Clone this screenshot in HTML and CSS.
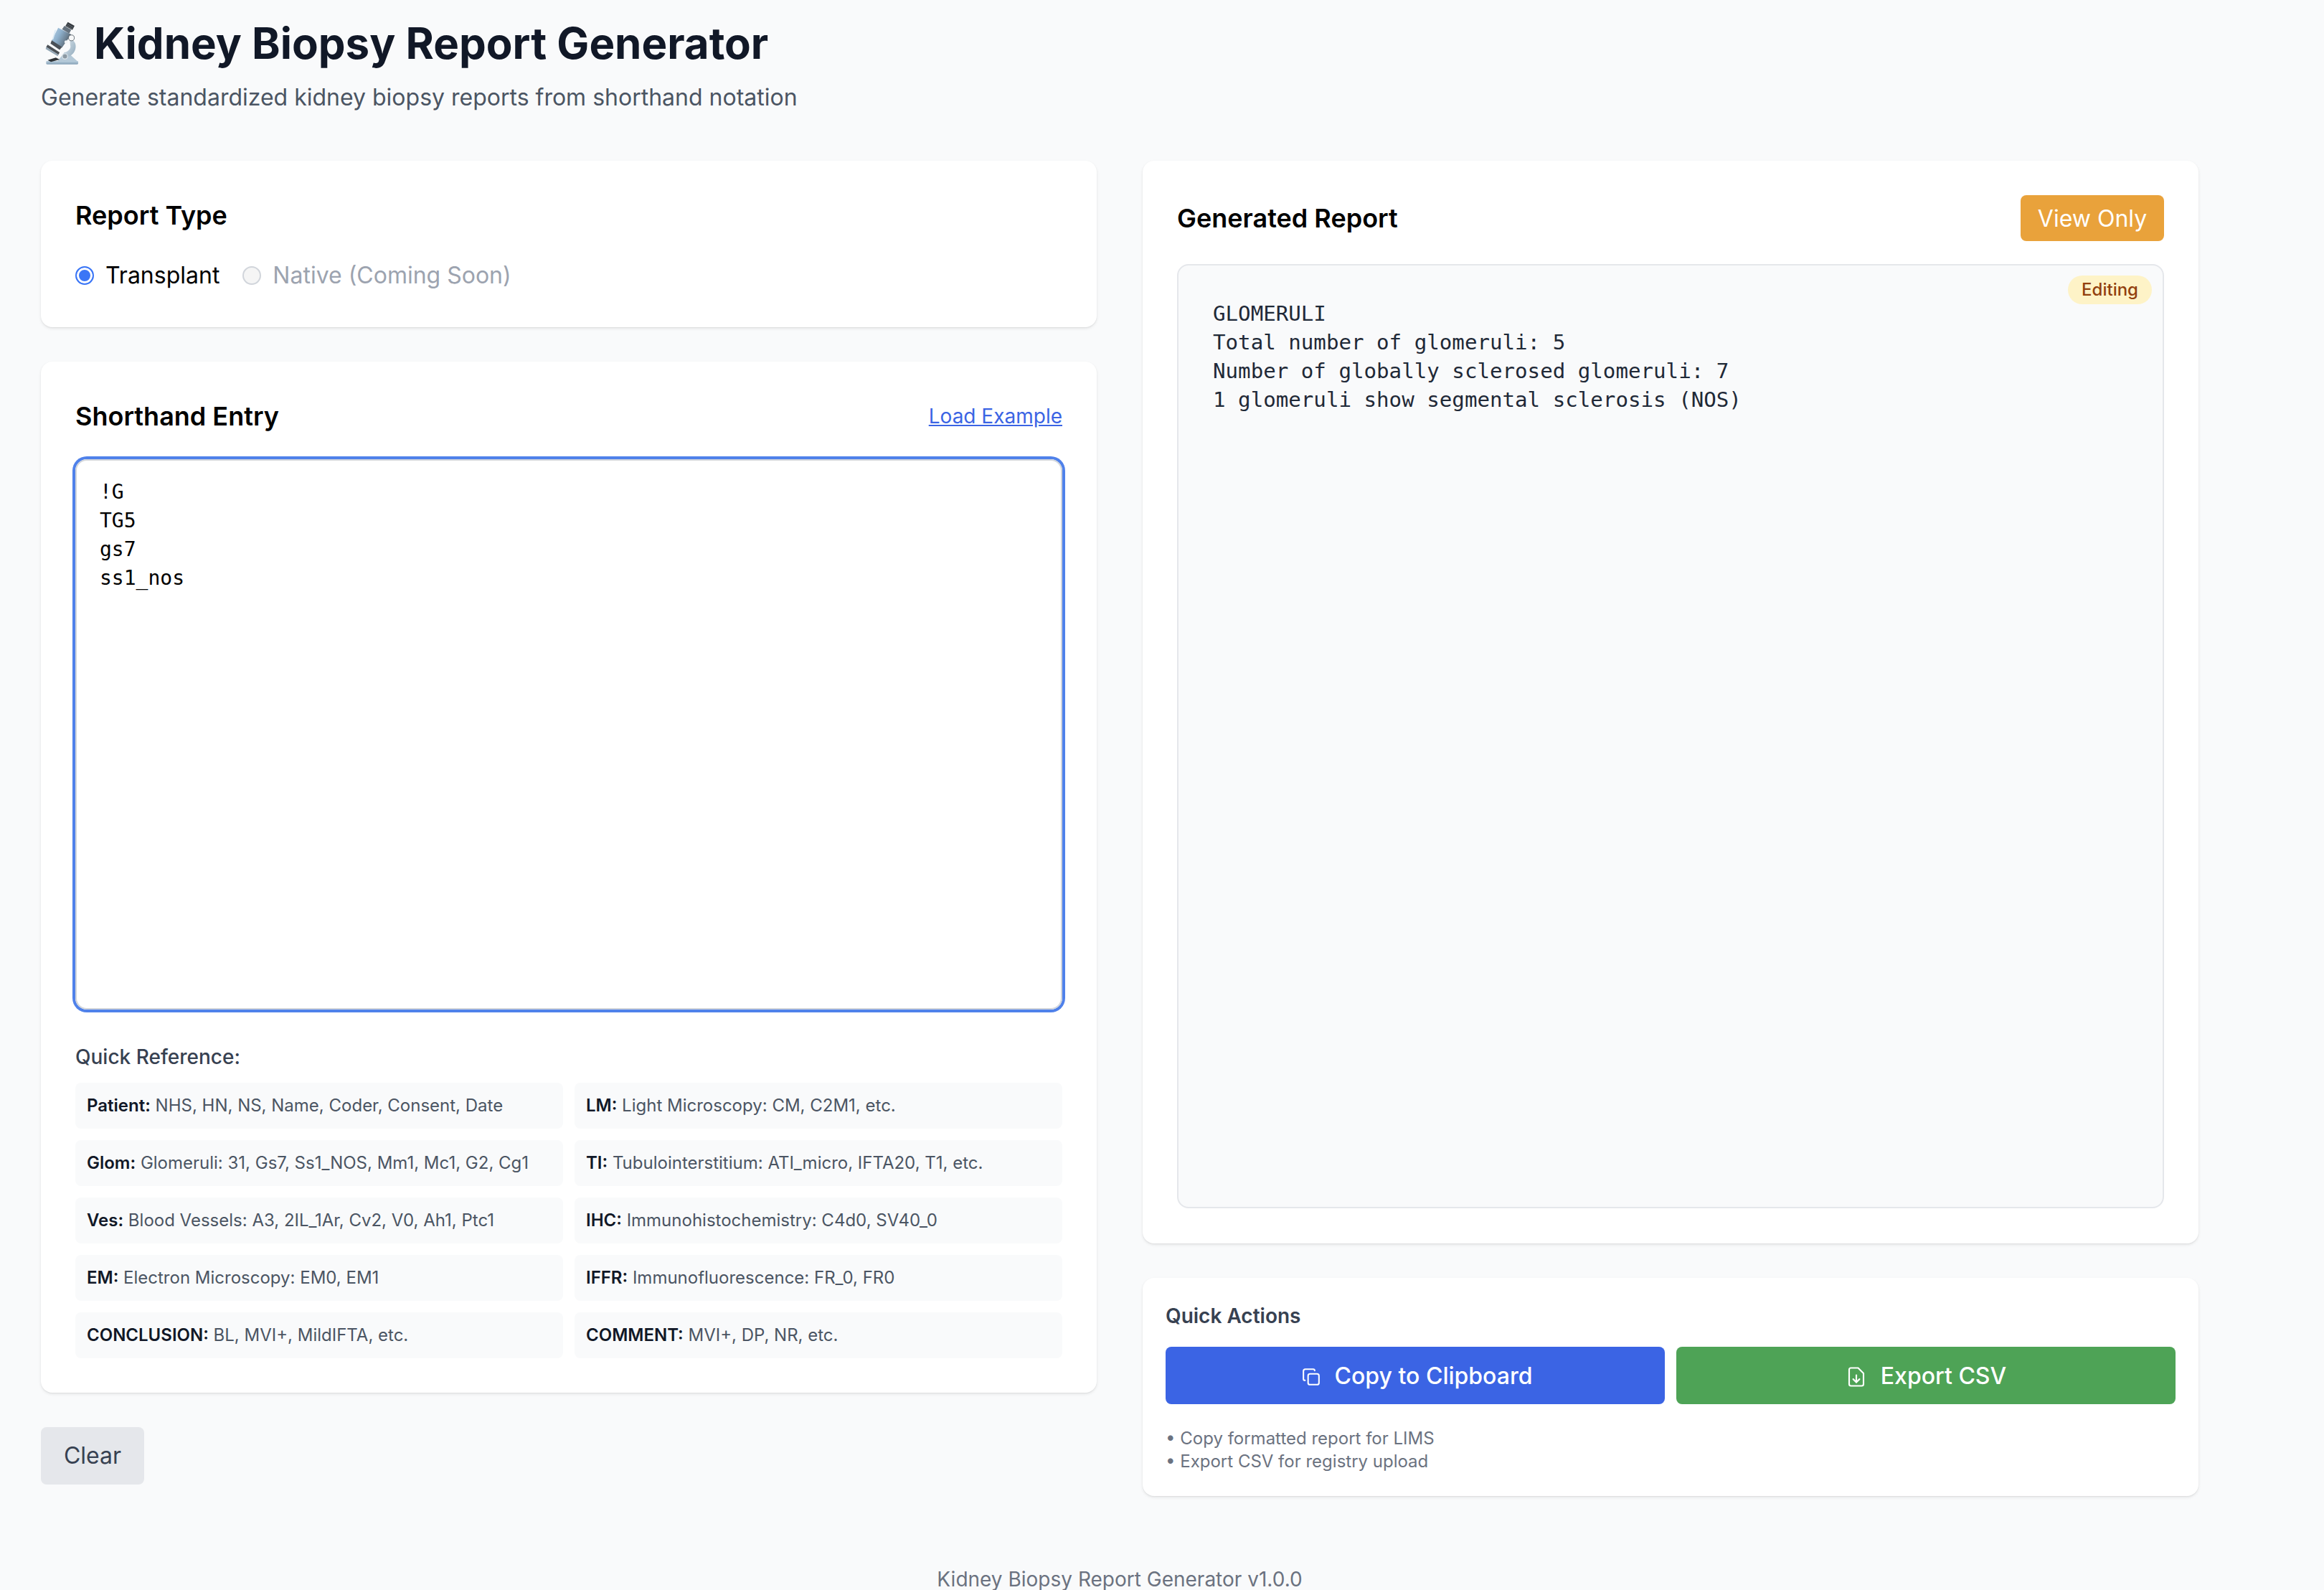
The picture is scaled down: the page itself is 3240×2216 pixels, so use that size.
FILE: index.html
```html
<!DOCTYPE html>
<html lang="en">
<head>
<meta charset="utf-8">
<title>Kidney Biopsy Report Generator</title>
<link rel="stylesheet" href="styles.css">
</head>
<body>
<div class="page">
  <header class="header">
    <h1 class="title">
      <svg class="scope" viewBox="68 55 140 185" aria-hidden="true">
        <defs>
          <linearGradient id="tube" x1="0" y1="0" x2="1" y2="0.55">
            <stop offset="0" stop-color="#b9d3e8"/>
            <stop offset="0.45" stop-color="#8eb0cc"/>
            <stop offset="0.8" stop-color="#6b7f90"/>
            <stop offset="1" stop-color="#3f4a55"/>
          </linearGradient>
          <linearGradient id="arm" x1="0" y1="0" x2="1" y2="1">
            <stop offset="0" stop-color="#d8e3ea"/>
            <stop offset="1" stop-color="#90a9bc"/>
          </linearGradient>
          <linearGradient id="base" x1="0" y1="0" x2="0" y2="1">
            <stop offset="0" stop-color="#bcd0df"/>
            <stop offset="1" stop-color="#84a0b6"/>
          </linearGradient>
        </defs>
        <path d="M118 224 L148 186 C160 184 172 196 205 226 Z" fill="#b4c8d7"/>
        <path d="M170 130 C190 134 198 152 194 170 C191 186 180 198 166 204 L152 186 C168 180 176 168 172 156 Z" fill="url(#arm)"/>
        <rect x="72" y="222" width="133" height="14" rx="4" fill="url(#base)"/>
        <circle cx="150" cy="203" r="11" fill="#8c99a3" stroke="#d5dfe6" stroke-width="4"/>
        <path d="M162 60 L190 76 L181 93 L152 77 Z" fill="#34393e"/>
        <path d="M160 68 L184 82 M156 74 L181 88" stroke="#7c868e" stroke-width="2"/>
        <path d="M148 76 L176 92 L168 108 L138 90 Z" fill="#66737f"/>
        <path d="M122 84 L176 112 L138 166 C124 164 104 154 95 136 Z" fill="url(#tube)"/>
        <path d="M95 136 L138 164 L128 176 L90 150 Z" fill="#4a5057"/>
        <path d="M110 95 L100 130" stroke="#dcebf6" stroke-width="5" stroke-linecap="round"/>
        <circle cx="177" cy="126" r="12" fill="#f7f8f9" stroke="#4d565e" stroke-width="2.5"/>
        <circle cx="155" cy="143" r="7" fill="#f2f4f6"/>
        <path d="M78 154 L128 186 L123 196 L72 164 Z" fill="#4b5056"/>
        <path d="M72 164 L123 196 L120 202 L70 172 Z" fill="#93a6b5"/>
        <path d="M78 218 L112 208 L128 216 L92 226 Z" fill="#2f3337"/>
      </svg>
      <span>Kidney Biopsy Report Generator</span>
    </h1>
    <p class="subtitle">Generate standardized kidney biopsy reports from shorthand notation</p>
  </header>

  <main class="columns">
    <div class="column">
      <section class="card card-type">
        <h2 class="card-title">Report Type</h2>
        <div class="radios">
          <label class="radio"><span class="dot dot-on"></span>Transplant</label>
          <label class="radio radio-off"><span class="dot dot-off"></span>Native (Coming Soon)</label>
        </div>
      </section>

      <section class="card card-entry">
        <div class="entry-head">
          <h2 class="card-title">Shorthand Entry</h2>
          <a class="link" href="#">Load Example</a>
        </div>
        <div class="input-box">!G
TG5
gs7
ss1_nos</div>
        <h3 class="ref-title">Quick Reference:</h3>
        <div class="ref-grid">
          <div class="ref"><b>Patient:</b> NHS, HN, NS, Name, Coder, Consent, Date</div>
          <div class="ref"><b>LM:</b> Light Microscopy: CM, C2M1, etc.</div>
          <div class="ref"><b>Glom:</b> Glomeruli: 31, Gs7, Ss1_NOS, Mm1, Mc1, G2, Cg1</div>
          <div class="ref"><b>TI:</b> Tubulointerstitium: ATI_micro, IFTA20, T1, etc.</div>
          <div class="ref"><b>Ves:</b> Blood Vessels: A3, 2IL_1Ar, Cv2, V0, Ah1, Ptc1</div>
          <div class="ref"><b>IHC:</b> Immunohistochemistry: C4d0, SV40_0</div>
          <div class="ref"><b>EM:</b> Electron Microscopy: EM0, EM1</div>
          <div class="ref"><b>IFFR:</b> Immunofluorescence: FR_0, FR0</div>
          <div class="ref"><b>CONCLUSION:</b> BL, MVI+, MildIFTA, etc.</div>
          <div class="ref"><b>COMMENT:</b> MVI+, DP, NR, etc.</div>
        </div>
      </section>

      <div class="clear-row"><button class="btn-clear">Clear</button></div>
    </div>

    <div class="column">
      <section class="card card-report">
        <div class="report-head">
          <h2 class="card-title">Generated Report</h2>
          <button class="btn-view">View Only</button>
        </div>
        <div class="report-box">
          <span class="badge">Editing</span>
          <pre class="report-text">GLOMERULI
Total number of glomeruli: 5
Number of globally sclerosed glomeruli: 7
1 glomeruli show segmental sclerosis (NOS)</pre>
        </div>
      </section>

      <section class="card card-actions">
        <h3 class="actions-title">Quick Actions</h3>
        <div class="actions">
          <button class="btn-action btn-copy">
            <svg class="icon-copy" viewBox="0 0 24 24" fill="none" stroke="currentColor" stroke-width="1.9" stroke-linecap="round" stroke-linejoin="round"><rect x="8" y="8" width="14" height="14" rx="2.5"/><path d="M4 16.5c-1.1 0-2-.9-2-2V4.5c0-1.4 1.1-2.5 2.5-2.5h10c1.1 0 2 .9 2 2"/></svg>
            Copy to Clipboard
          </button>
          <button class="btn-action btn-csv">
            <svg class="icon-csv" viewBox="0 0 24 24" fill="none" stroke="currentColor" stroke-width="1.7" stroke-linecap="round" stroke-linejoin="round"><path d="M14 2H6a2 2 0 0 0-2 2v16a2 2 0 0 0 2 2h12a2 2 0 0 0 2-2V8z"/><path d="M12 10v8"/><path d="M8.5 14.5L12 18l3.5-3.5"/></svg>
            Export CSV
          </button>
        </div>
        <ul class="notes">
          <li>• Copy formatted report for LIMS</li>
          <li>• Export CSV for registry upload</li>
        </ul>
      </section>
    </div>
  </main>

  <footer class="footer">Kidney Biopsy Report Generator v1.0.0</footer>
</div>
</body>
</html>
```
FILE: styles.css
```css
* { box-sizing: border-box; }
html, body { margin: 0; padding: 0; }
body {
  background: #f9fafb;
  font-family: Inter, "Liberation Sans", sans-serif;
  color: #111827;
}
.page { width: 3122px; height: 2216px; padding: 0 57px; overflow: hidden; }
.header { height: 224px; padding-top: 24px; }
.title {
  display: flex;
  align-items: center;
  gap: 21px;
  margin: 0;
  height: 72px;
  font-size: 60px;
  line-height: 72px;
  font-weight: 700;
  color: #111827;
}
.scope { width: 47px; height: 62px; margin-left: 6px; flex: none; }
.subtitle { margin: 16px 0 0; font-size: 32px; line-height: 48px; color: #4b5563; }
.columns { display: grid; grid-template-columns: 1472px 1472px; column-gap: 64px; }
.column { display: flex; flex-direction: column; gap: 48px; }
.card {
  background: #fff;
  border-radius: 16px;
  box-shadow: 0 2px 4px rgba(0,0,0,.08), 0 1px 2px rgba(0,0,0,.06);
}
.card-type { height: 232px; padding: 48px; }
.card-title { margin: 0; font-size: 36px; line-height: 56px; font-weight: 600; color: #000; }
.radios { display: flex; gap: 32px; margin-top: 28px; }
.radio { display: flex; align-items: center; gap: 16px; font-size: 32px; line-height: 56px; color: #000; }
.radio-off { color: #9ca3af; }
.dot { width: 26px; height: 26px; border-radius: 50%; flex: none; }
.dot-on { background: #3b76f6; border: 2px solid #3b76f6; box-shadow: inset 0 0 0 3px #fff; }
.dot-off { background: #f5f5f5; border: 2px solid #d1d5db; }
.card-entry { height: 1437px; padding: 48px; }
.entry-head { display: flex; justify-content: space-between; align-items: center; height: 56px; }
.link { font-size: 28px; color: #3b64e4; text-decoration: underline; }
.input-box {
  height: 767px;
  margin-top: 32px;
  padding: 24px 32px;
  border: 2px solid #d1d5db;
  border-radius: 16px;
  box-shadow: 0 0 0 4px #4f81ea;
  font-family: "DejaVu Sans Mono", monospace;
  font-size: 28px;
  line-height: 40px;
  color: #000;
  white-space: pre;
}
.ref-title { margin: 46px 0 0; font-size: 28px; line-height: 40px; font-weight: 500; color: #374151; }
.ref-grid { display: grid; grid-template-columns: 1fr 1fr; gap: 16px; margin-top: 16px; }
.ref {
  height: 64px;
  padding: 0 16px;
  border-radius: 8px;
  background: #f9fafb;
  font-size: 24px;
  line-height: 64px;
  color: #4b5563;
  white-space: nowrap;
}
.ref b { font-weight: 600; color: #111827; }
.clear-row { display: flex; }
.btn-clear {
  width: 144px;
  height: 80px;
  padding: 0 0 2px;
  border: 0;
  border-radius: 8px;
  background: #e5e7eb;
  color: #374151;
  font: 400 32px Inter, sans-serif;
}
.card-report { height: 1509px; padding: 48px; }
.report-head { display: flex; justify-content: space-between; align-items: center; height: 64px; }
.btn-view {
  width: 200px;
  height: 64px;
  border: 0;
  border-radius: 8px;
  background: #e9a23b;
  color: #fff;
  font: 400 32px Inter, sans-serif;
}
.report-box {
  position: relative;
  height: 1316px;
  margin-top: 32px;
  padding: 47px 48px;
  border: 2px solid #e5e7eb;
  border-radius: 16px;
  background: #f9fafb;
}
.badge {
  position: absolute;
  top: 14px;
  right: 15px;
  height: 40px;
  padding: 0 19px;
  border-radius: 20px;
  background: #fef3c7;
  color: #92400e;
  font-size: 24px;
  line-height: 40px;
  font-weight: 500;
}
.report-text {
  margin: 0;
  font-family: "DejaVu Sans Mono", monospace;
  font-size: 29.15px;
  line-height: 40px;
  color: #1f2937;
}
.card-actions { height: 304px; padding: 32px; }
.actions-title { margin: 0; font-size: 28px; line-height: 42px; font-weight: 600; color: #374151; }
.actions { display: grid; grid-template-columns: 1fr 1fr; gap: 16px; margin-top: 22px; }
.btn-action {
  display: flex;
  align-items: center;
  justify-content: center;
  height: 80px;
  border: 0;
  border-radius: 8px;
  color: #fff;
  font: 500 32px Inter, sans-serif;
}
.btn-copy { background: #3b64e4; gap: 20px; padding: 0 0 0 5px; }
.btn-csv { background: #4ea356; gap: 19px; }
.icon-copy { width: 26px; height: 26px; margin-top: 3px; }
.icon-csv { width: 30px; height: 30px; margin-top: 3px; }
.notes { list-style: none; margin: 32px 0 0; padding: 0; font-size: 24px; line-height: 32px; color: #6b7280; }
.footer { margin-top: 101px; text-align: center; font-size: 28px; line-height: 30px; color: #6b7280; }
```
